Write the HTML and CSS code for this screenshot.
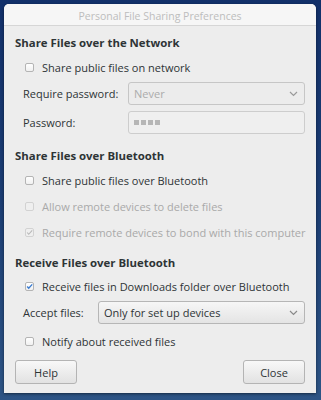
FILE: index.html
```html
<!DOCTYPE html>
<html lang="en">
  <head>
    <meta charset="UTF-8" />
    <title>Personal File Sharing Preferences</title>
    <link rel="stylesheet" href="styles.css">
  </head>
  <body>
    <div class="window">
      <div class="titlebar">Personal File Sharing Preferences</div>

      <div class="content">
        <h3 class="section-title first">Share Files over the Network</h3>
        <label class="check-row">
          <span class="box"></span>
          <span>Share public files on network</span>
        </label>
        <div class="form-grid net-grid">
          <span class="field-label">Require password:</span>
          <div class="combo disabled">
            <span>Never</span>
            <svg class="chevron" width="9" height="6" viewBox="0 0 9 6"><path d="M1 1 L4.5 4.5 L8 1" fill="none" stroke="#9a9a9a" stroke-width="1.2"/></svg>
          </div>
          <span class="field-label">Password:</span>
          <div class="entry disabled">
            <span class="dots"><i></i><i></i><i></i><i></i></span>
          </div>
        </div>

        <h3 class="section-title">Share Files over Bluetooth</h3>
        <label class="check-row">
          <span class="box"></span>
          <span>Share public files over Bluetooth</span>
        </label>
        <label class="check-row inactive">
          <span class="box"></span>
          <span>Allow remote devices to delete files</span>
        </label>
        <label class="check-row inactive">
          <span class="box checked">
            <svg width="9" height="9" viewBox="0 0 9 9"><path d="M1.5 4.5 L3.5 6.8 L8 1.8" fill="none" stroke="#b8b8b8" stroke-width="1.4"/></svg>
          </span>
          <span>Require remote devices to bond with this computer</span>
        </label>

        <h3 class="section-title">Receive Files over Bluetooth</h3>
        <label class="check-row receive">
          <span class="box checked">
            <svg width="9" height="9" viewBox="0 0 9 9"><path d="M1.5 4.5 L3.5 6.8 L8 1.8" fill="none" stroke="#3b7cd0" stroke-width="1.8"/></svg>
          </span>
          <span>Receive files in Downloads folder over Bluetooth</span>
        </label>
        <div class="form-grid accept-grid">
          <span class="field-label">Accept files:</span>
          <div class="combo">
            <span>Only for set up devices</span>
            <svg class="chevron" width="9" height="6" viewBox="0 0 9 6"><path d="M1 1 L4.5 4.5 L8 1" fill="none" stroke="#8a8a8a" stroke-width="1.2"/></svg>
          </div>
        </div>
        <label class="check-row notify">
          <span class="box"></span>
          <span>Notify about received files</span>
        </label>

        <div class="buttons">
          <button type="button">Help</button>
          <button type="button">Close</button>
        </div>
      </div>
    </div>
  </body>
</html>
```

FILE: styles.css
```css
* {
  margin: 0;
  padding: 0;
  box-sizing: border-box;
}

body {
  width: 321px;
  height: 400px;
  overflow: hidden;
  background: linear-gradient(180deg, #12306a 0%, #1b3d73 50%, #2d5485 100%);
  font-family: "Open Sans", "DejaVu Sans", sans-serif;
  font-size: 11px;
  color: #2e3436;
}

.window {
  margin: 4px 0 0 4px;
  width: 312px;
  height: 389px;
  background: #ededed;
  border-radius: 5px 5px 0 0;
  box-shadow: 0 1px 3px rgba(0, 0, 0, 0.5);
  overflow: hidden;
}

.titlebar {
  height: 22px;
  padding-top: 2px;
  line-height: 21px;
  text-align: center;
  background: #f6f6f6;
  border-bottom: 1px solid #d6d6d6;
  color: #bdbdbd;
  font-size: 10.5px;
}

.content {
  padding: 0 11px 0 11px;
}

.section-title {
  height: 18px;
  line-height: 18px;
  font-size: 11.4px;
  font-weight: bold;
  margin-top: 13px;
  white-space: nowrap;
}

.section-title.first {
  margin-top: 8px;
}

.check-row {
  display: flex;
  align-items: center;
  height: 18px;
  margin-top: 6px;
  padding-left: 10px;
  gap: 8px;
  white-space: nowrap;
}

.check-row + .check-row {
  margin-top: 8px;
}

.check-row.inactive {
  color: #a9a9a9;
}

.check-row.receive {
  margin-top: 5px;
}

.check-row.notify {
  margin-top: 8px;
}

.box {
  width: 9px;
  height: 9px;
  border: 1px solid #b4b4b4;
  border-radius: 2px;
  background: linear-gradient(#ffffff, #f0f0f0);
  display: flex;
  align-items: center;
  justify-content: center;
  flex-shrink: 0;
}

.inactive .box {
  border-color: #d2d2d2;
  background: #efefef;
}

.box svg {
  display: block;
}

.form-grid {
  display: grid;
  align-items: center;
  row-gap: 6px;
  padding-left: 8px;
  margin-top: 6px;
}

.net-grid {
  grid-template-columns: 105px 1fr;
}

.accept-grid {
  grid-template-columns: 75px 1fr;
}

.combo,
.entry {
  height: 23px;
  display: flex;
  align-items: center;
  justify-content: space-between;
  padding: 0 6px 0 5px;
  border: 1px solid #b6b6b6;
  border-radius: 3px;
  background: linear-gradient(#f6f6f6, #e4e4e4);
}

.combo.disabled {
  border-color: #c6c6c6;
  background: #ececec;
  color: #ababab;
}

.entry.disabled {
  border-color: #cdcdcd;
  background: #efefef;
}

.dots {
  display: flex;
  gap: 2px;
}

.dots i {
  width: 5px;
  height: 5px;
  background: #b6b6b6;
}

.buttons {
  display: flex;
  justify-content: space-between;
  margin-top: 10px;
}

button {
  width: 62px;
  height: 24px;
  border: 1px solid #b4b4b4;
  border-radius: 3px;
  background: linear-gradient(#f8f8f8, #e2e2e2);
  font-family: "Open Sans", "DejaVu Sans", sans-serif;
  font-size: 11px;
  color: #2e3436;
}
```
